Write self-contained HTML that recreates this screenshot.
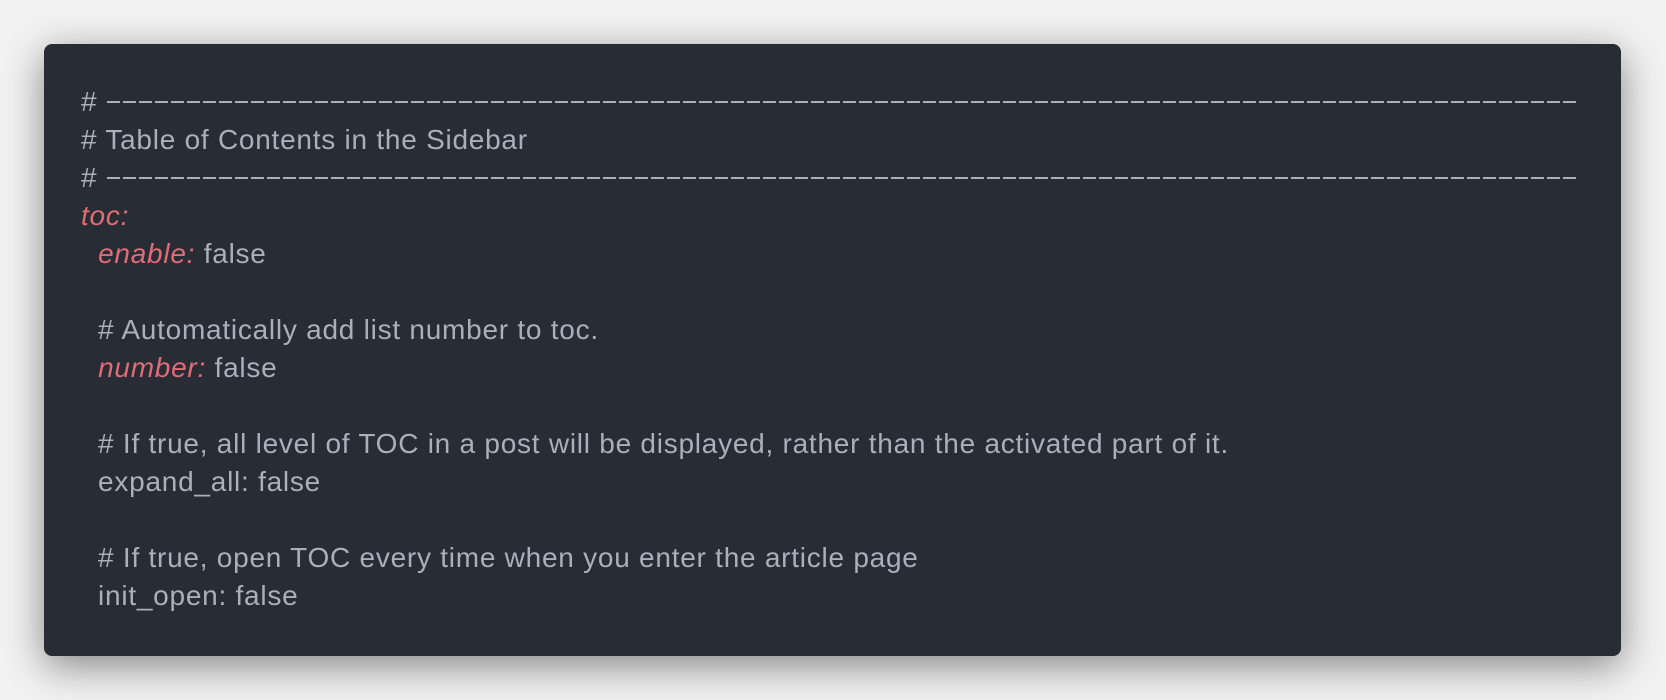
<!DOCTYPE html>
<html><head><meta charset="utf-8"><style>
html,body{margin:0;padding:0;}
body{width:1666px;height:700px;background:#f2f2f2;overflow:hidden;position:relative;}
.box{position:absolute;left:44px;top:44px;width:1577px;height:612px;background:#282c35;border-radius:8px;box-shadow:0 10px 40px rgba(0,0,0,0.45);}
pre{margin:0;position:absolute;left:81px;top:83px;font-family:"Liberation Sans",sans-serif;font-size:28px;letter-spacing:0.75px;line-height:38px;color:#a9afbb;white-space:pre;}
.r{color:#e06c75;font-style:italic;}
.d{position:absolute;left:107px;width:1472px;height:2px;background:repeating-linear-gradient(90deg,#a9afbb 0 13px,transparent 13px 16px);}
</style></head><body>
<div class="box"></div>
<div class="d" style="top:101px"></div>
<div class="d" style="top:177px"></div>
<pre>#
# Table of Contents in the Sidebar
#
<span class="r">toc:</span>
  <span class="r">enable:</span> false

  # Automatically add list number to toc.
  <span class="r">number:</span> false

  # If true, all level of TOC in a post will be displayed, rather than the activated part of it.
  expand_all: false

  # If true, open TOC every time when you enter the article page
  init_open: false</pre>
</body></html>
